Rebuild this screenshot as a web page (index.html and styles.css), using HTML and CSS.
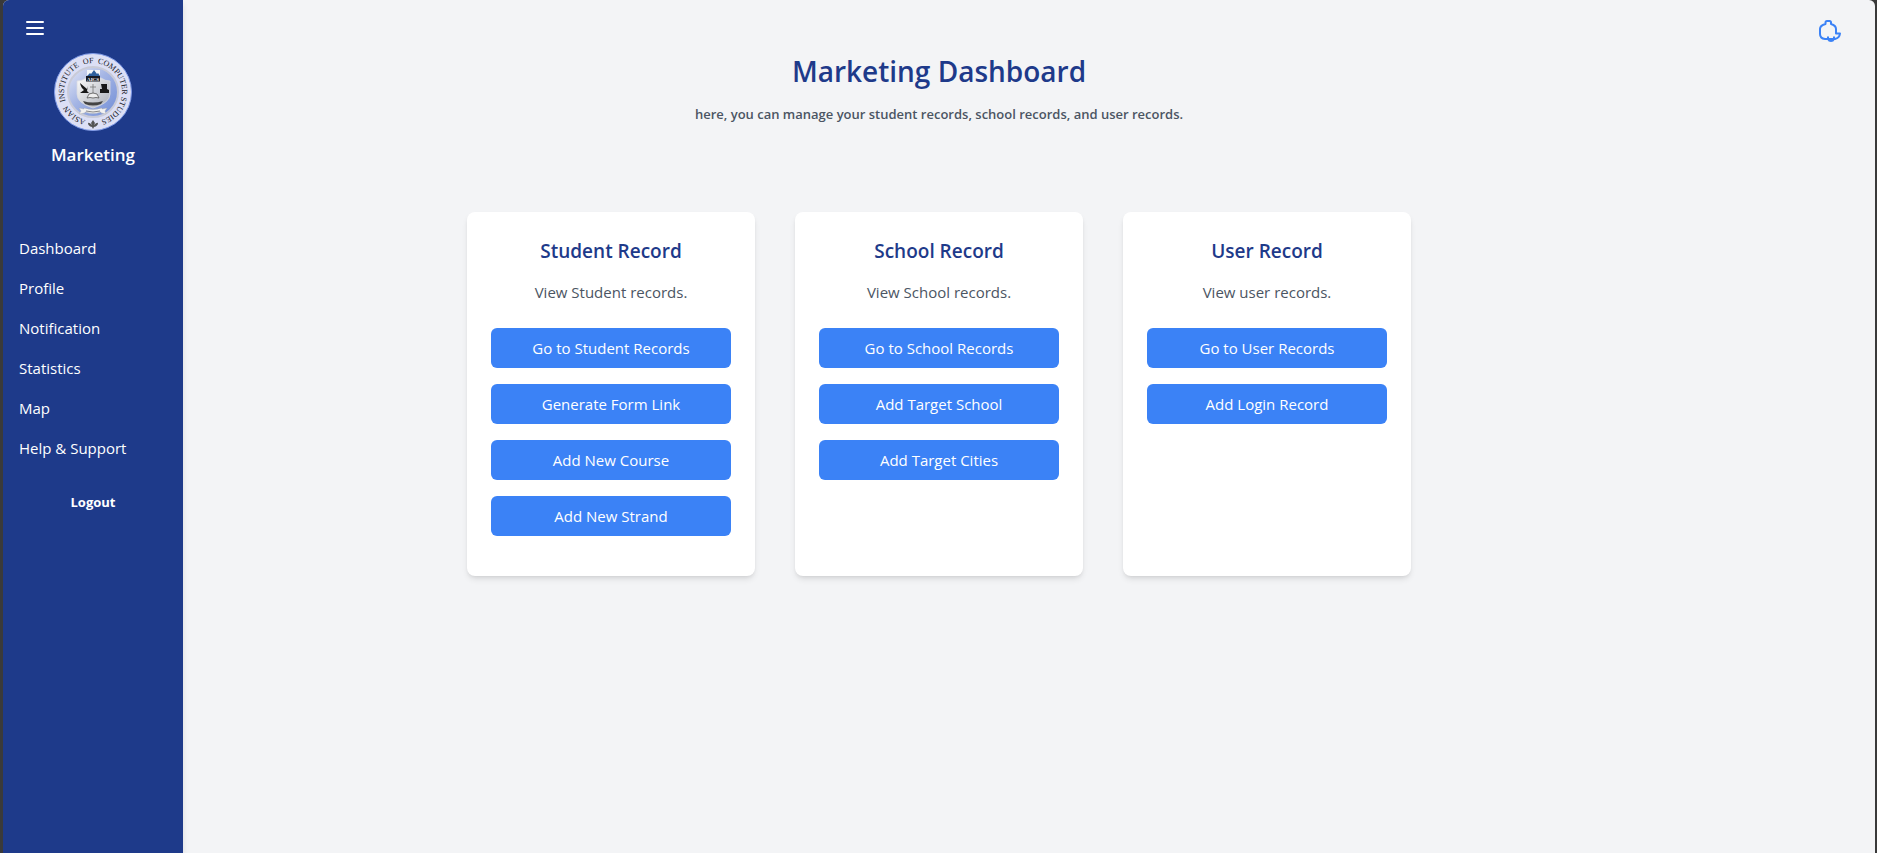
FILE: index.html
```html
<!DOCTYPE html>
<html lang="en">
<head>
<meta charset="utf-8">
<title>Marketing Dashboard</title>
<link rel="stylesheet" href="styles.css">
</head>
<body>
<div class="app">
  <aside class="sidebar">
    <button class="icon-button menu-button" type="button" aria-label="Toggle menu">
      <svg class="icon" viewBox="0 0 24 24" fill="none" stroke="currentColor" stroke-width="2" stroke-linecap="round"><path d="M4 6h16M4 12h16M4 18h16"/></svg>
    </button>
    <div class="brand">
      <svg class="logo" viewBox="0 0 80 80" role="img" aria-label="Asian Institute of Computer Studies">
        <defs>
          <linearGradient id="disc" x1="0" y1="0" x2="1" y2="1"><stop offset="0" stop-color="#e4e7f6"/><stop offset=".45" stop-color="#a3b4e4"/><stop offset="1" stop-color="#6f8cd6"/></linearGradient>
          <linearGradient id="shield" x1="0" y1="0" x2="1" y2="1"><stop offset="0" stop-color="#fafafa"/><stop offset="1" stop-color="#a9adb7"/></linearGradient>
          <path id="ring" d="M40 69A29 29 0 0 1 40 11A29 29 0 0 1 40 69"/>
        </defs>
        <circle cx="40" cy="40" r="38.500" fill="#dcdff5" stroke="#7f9ae6"/>
        <circle cx="40" cy="40" r="25" fill="url(#disc)" stroke="#c9cbd8" stroke-width="2"/>
        <text class="logo-text"><textPath href="#ring" startOffset="10.700%">ASIAN</textPath></text>
        <text class="logo-text"><textPath href="#ring" startOffset="31%">INSTITUTE</textPath></text>
        <text class="logo-text"><textPath href="#ring" startOffset="47.500%">OF</textPath></text>
        <text class="logo-text"><textPath href="#ring" startOffset="64.500%">COMPUTER</textPath></text>
        <text class="logo-text"><textPath href="#ring" startOffset="86.500%">STUDIES</textPath></text>
        <path d="M34 18h13v8H34z" fill="#f3f6fa"/>
        <path d="M34 24l3-3 1 1 3-4 3 4 1-1 2 3z" fill="#2e609d"/>
        <path d="M24 29q5 0 9-3h15q4 3 9 3v13q0 9-17 14Q24 51 24 42z" fill="url(#shield)" stroke="#d9dbe2" stroke-width=".8"/>
        <path d="M33 24h14v5.500H33z" fill="#171b26"/>
        <text class="logo-mark" x="40" y="28.600">AICS</text>
        <path d="M27 31l7 6 1-3-1 5 2 2h-9l4-3q-3-2-4-7zM48 32h6v5l2 1v3h-9v-4h2z" fill="#181818"/>
        <path d="M40 32v11M37 35h6" fill="none" stroke="#777" stroke-width=".8"/>
        <path d="M34 46l2-4 4-1 4 1 2 4q-3-1-6 0-3-1-6 0z" fill="#eee" stroke="#555" stroke-width=".8"/>
        <path d="M30 49q10 3 20 0l-2 3q-8 3-16 0z" fill="#444"/>
        <path d="M26 56l5 1v-1q9 3 18 0v1l5-1-2 3 1 3-5-1v-1q-8 3-16 0v1l-6 1 2-3z" fill="#f2f2f2" stroke="#aaa" stroke-width=".4"/>
        <path d="M33 59q7 2 14 0" fill="none" stroke="#888" stroke-width="1"/>
        <path d="M40 68l2 3-1 2q3-3 4-2 0 3-4 4l-1 2-1-2q-4-1-4-4 1-1 4 2l-1-2z" fill="#555"/>
      </svg>
      <h2 class="brand-name">Marketing</h2>
    </div>
    <nav class="nav">
      <a href="#">Dashboard</a>
      <a href="#">Profile</a>
      <a href="#">Notification</a>
      <a href="#">Statistics</a>
      <a href="#">Map</a>
      <a href="#">Help &amp; Support</a>
    </nav>
    <button class="logout" type="button">Logout</button>
  </aside>

  <main class="main">
    <header class="intro">
      <h1>Marketing Dashboard</h1>
      <p>here, you can manage your student records, school records, and user records.</p>
    </header>
    <div class="cards">
      <section class="card">
        <h2>Student Record</h2>
        <p>View Student records.</p>
        <div class="actions">
          <button type="button">Go to Student Records</button>
          <button type="button">Generate Form Link</button>
          <button type="button">Add New Course</button>
          <button type="button">Add New Strand</button>
        </div>
      </section>
      <section class="card">
        <h2>School Record</h2>
        <p>View School records.</p>
        <div class="actions">
          <button type="button">Go to School Records</button>
          <button type="button">Add Target School</button>
          <button type="button">Add Target Cities</button>
        </div>
      </section>
      <section class="card">
        <h2>User Record</h2>
        <p>View user records.</p>
        <div class="actions">
          <button type="button">Go to User Records</button>
          <button type="button">Add Login Record</button>
        </div>
      </section>
    </div>
  </main>

  <div class="tools">
    <button class="icon-button bell-button" type="button" aria-label="Notifications">
      <svg class="icon" viewBox="0 0 24 24" fill="none" stroke="currentColor" stroke-width="2" stroke-linejoin="round"><path d="M8.500 5V3.500Q8.500 2 10 2h2.500Q14 2 14 3.500V5Q19 6.500 19 10v4.500h4Q22.500 19 18 20H8Q3 19.500 3 15v-5Q3 6.500 8.500 5zM11 17.500V20q1 2 3 2t3-2v-2.500"/></svg>
    </button>
  </div>
</div>
</body>
</html>
```

FILE: styles.css
```css
* { box-sizing: border-box; }
body, h1, h2, p { margin: 0; }
body {
  background: #3a3a3a;
  font-family: "Open Sans", "Noto Sans", sans-serif;
  font-size: 15px;
  line-height: 24px;
}
button {
  border: 0;
  padding: 0;
  font: inherit;
  cursor: pointer;
}
.app {
  display: grid;
  grid-template-columns: 180px 1fr 180px;
  min-height: 100vh;
  margin: 0 2px 0 3px;
  background: #f3f4f6;
  border-radius: 6px 6px 0 0;
  overflow: hidden;
}
.sidebar {
  display: flex;
  flex-direction: column;
  padding: 16px;
  background: #1e3a8a;
  color: #fff;
  box-shadow: 0 4px 6px rgba(0, 0, 0, .1);
}
.icon-button { background: none; height: 24px; }
.icon { display: block; width: 24px; height: 24px; }
.menu-button { align-self: flex-start; margin-left: 4px; color: #fff; }
.brand {
  display: flex;
  flex-direction: column;
  align-items: center;
  gap: 8px;
  margin-top: 12px;
}
.logo { width: 80px; height: 80px; }
.logo-text { font: 8px "Liberation Serif", serif; fill: #16181f; text-anchor: middle; }
.logo-mark { font: bold 5px "Liberation Serif", serif; fill: #fff; text-anchor: middle; }
.brand-name { font-size: 17px; line-height: 30px; font-weight: 600; }
.nav {
  display: flex;
  flex-direction: column;
  gap: 16px;
  margin-top: 66px;
}
.nav a { color: #fff; text-decoration: none; }
.logout {
  align-self: center;
  margin-top: 30px;
  background: none;
  color: #fff;
  font-size: 13px;
  font-weight: 700;
}
.main { padding: 52px 24px; }
.intro { text-align: center; margin-bottom: 88px; }
.intro h1 {
  color: #1e3a8a;
  font-size: 28px;
  line-height: 38px;
  font-weight: 600;
}
.intro p {
  margin-top: 14px;
  color: #4b5563;
  font-size: 13px;
  line-height: 20px;
  font-weight: 600;
}
.cards {
  display: flex;
  flex-wrap: wrap;
  justify-content: center;
  gap: 40px;
}
.card {
  flex: 0 1 288px;
  padding: 24px 24px 40px;
  background: #fff;
  border-radius: 8px;
  box-shadow: 0 4px 6px -1px rgba(0, 0, 0, .1), 0 2px 4px -2px rgba(0, 0, 0, .1);
  text-align: center;
}
.card h2 {
  color: #1e3a8a;
  font-size: 19px;
  line-height: 30px;
  font-weight: 600;
}
.card p { margin-top: 14px; color: #4b5563; }
.actions {
  display: flex;
  flex-direction: column;
  gap: 16px;
  margin-top: 24px;
}
.actions button {
  padding: 8px 16px;
  background: #3b82f6;
  border-radius: 6px;
  color: #fff;
}
.tools {
  display: flex;
  justify-content: flex-end;
  align-items: flex-start;
  padding: 19px 34px;
}
.bell-button { color: #3b82f6; }
```
